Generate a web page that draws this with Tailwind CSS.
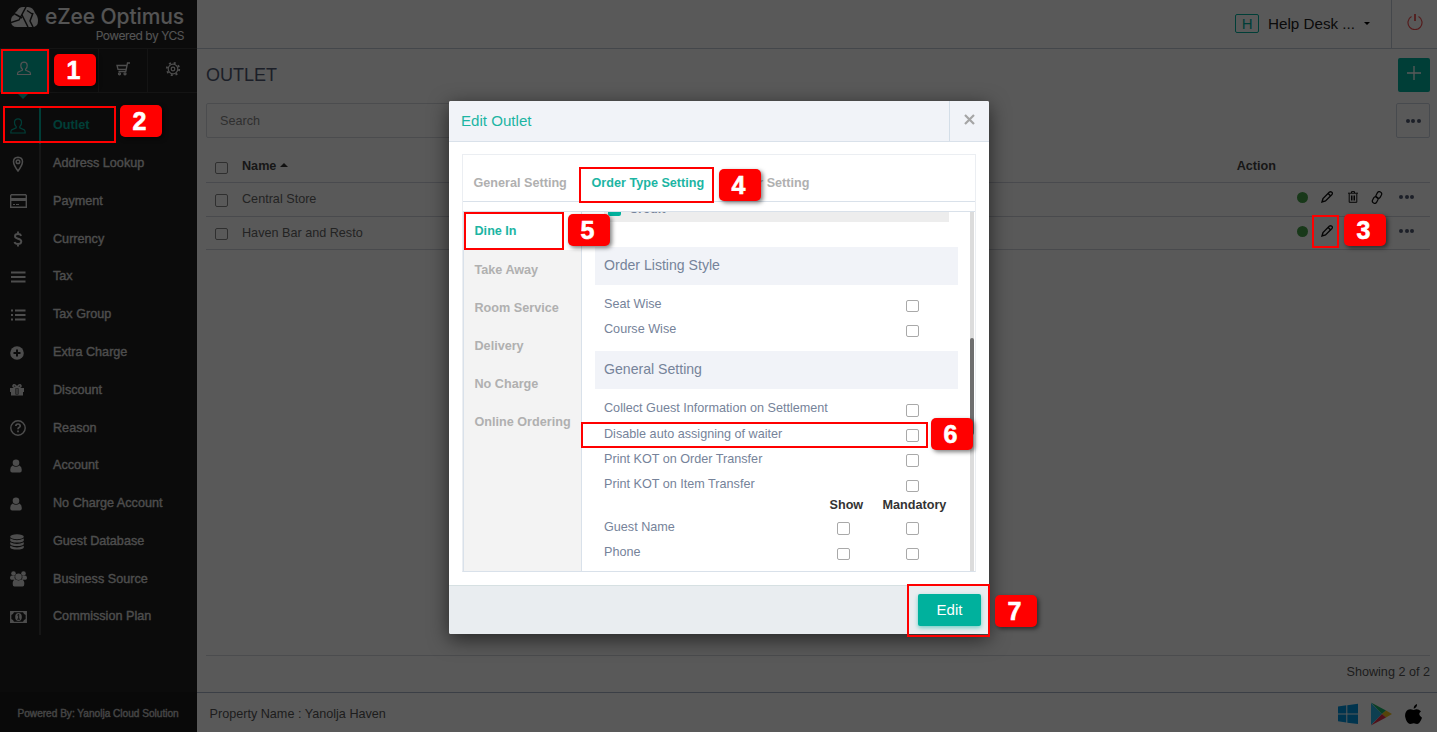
<!DOCTYPE html>
<html lang="en">
  <head>
    <meta charset="UTF-8" />
    <meta name="viewport" content="width=device-width, initial-scale=1.0" />
    <title>eZee Optimus - Outlet</title>
    <script src="https://cdn.jsdelivr.net/npm/@tailwindcss/browser@4"></script>
  </head>
  <body
    class="relative h-screen overflow-hidden bg-white font-['Liberation_Sans',Arial,sans-serif] text-[12.64px] leading-4 text-[#797979]"
  >
    <div class="flex h-full">
      <!-- Sidebar -->
      <aside class="flex w-[197px] shrink-0 flex-col bg-[#222222] text-[#f0f0f0]">
        <div class="flex h-12 gap-[6px] pl-[11px] pt-[7px]">
          <svg class="h-5 w-7 shrink-0" viewBox="0 0 28 20">
            <path d="M6 4Q8 0 12 0H17Q22 0 24 6Q27 9 27 14Q27 20 21 20H6Q0 20 0 14Q0 9 3.500 8Q4 5 6 4Z" fill="#e4e4e4" />
            <path d="M4 7L11 11M15 0L8 13L0 15.500M11 8L17 20M16 3.500L22 7.500M22 6L19 14L22 20" stroke="#222" stroke-width="1.500" fill="none" />
          </svg>
          <div class="-mt-1 w-[140px] font-['Inter',sans-serif]">
            <div class="h-6 whitespace-nowrap text-[21px] leading-7 font-medium tracking-[-0.1px]">eZee Optimus</div>
            <div class="mt-px whitespace-nowrap pr-px text-right text-[12px] leading-4 tracking-[-0.45px]">Powered by YCS</div>
          </div>
        </div>
        <div class="grid h-[45px] grid-cols-[49px_49px_49px_50px] border-y border-[#3a3a3a]">
          <div class="relative flex items-center justify-center bg-[#00b19d] pr-px pb-1">
            <svg class="h-4 w-4" viewBox="0 0 16 16" fill="none" stroke="#eee" stroke-width="1.200"><path d="M6.400 9.200V8.200Q4.600 6.800 4.800 4.200Q5 1.200 8 1.200T11.200 4.200Q11.400 6.800 9.600 8.200V9.200L14 11.200Q14.500 12 14.500 13.500H1.500Q1.500 12 2 11.200Z" /></svg>
            <span class="absolute left-[17px] top-[44px] border-x-[6px] border-t-[6px] border-x-transparent border-t-[#00b19d]"></span>
          </div>
          <div class="border-l border-[#3a3a3a]"></div>
          <div class="flex items-center justify-center border-l border-[#3a3a3a] pb-1">
            <svg class="h-4 w-4" viewBox="0 0 16 16" fill="none" stroke="#ddd" stroke-width="1.300"><path d="M15 2H12.500L10.800 10.500H3.500M12 4.500H2L3 8.300H11" /><circle cx="4.500" cy="12.800" r="1" /><circle cx="10" cy="12.800" r="1" /></svg>
          </div>
          <div class="flex items-center justify-center border-l border-[#3a3a3a] pb-1">
            <svg class="h-4 w-4" viewBox="0 0 16 16" fill="none" stroke="#ddd"><circle cx="8" cy="8" r="4.800" stroke-width="1.200" /><circle cx="8" cy="8" r="1.800" stroke-width="1.200" /><circle cx="8" cy="8" r="6.200" stroke-width="1.800" stroke-dasharray="2 2.870" /></svg>
          </div>
        </div>
        <nav class="mt-[13px] text-[#dcdcdc] [-webkit-text-stroke:0.35px]">
          <a class="flex h-[37.8px] text-[#00b19d]">
            <span class="flex w-[41px] items-center border-r-2 border-[#00b19d] pl-[10px] pt-[2px]">
              <svg class="h-4 w-4" viewBox="0 0 16 16" fill="none" stroke="currentColor" stroke-width="1.200"><path d="M6.200 9.800V8.600Q4.200 7 4.500 4Q4.800.800 8 .800T11.500 4Q11.800 7 9.800 8.600V9.800L14.500 12Q15.200 13 15.200 15H.800Q.800 13 1.500 12Z" /></svg>
            </span>
            <span class="pl-3 pt-[11px] font-bold [-webkit-text-stroke:0px]">Outlet</span>
          </a>
          <a class="flex h-[37.8px]">
            <span class="flex w-[41px] items-center border-r-2 border-[#404040] pl-[10px] pt-[2px]">
              <svg class="h-4 w-4" viewBox="0 0 16 16" fill="none" stroke="currentColor" stroke-width="1.500"><path d="M8 15Q3.500 9 3.500 5.500Q3.700 1.500 8 1.300Q12.300 1.500 12.500 5.500Q12.500 9 8 15Z" /><circle cx="8" cy="5.800" r="1.800" /></svg>
            </span>
            <span class="pl-3 pt-[11px]">Address Lookup</span>
          </a>
          <a class="flex h-[37.8px]">
            <span class="flex w-[41px] items-center border-r-2 border-[#404040] pl-[10px] pt-[2px]">
              <svg class="h-[14px] w-[17px]" viewBox="0 0 17 14"><path d="M1.500.700H15.500L16.300 1.500V13.300H.700V1.500Z" fill="none" stroke="currentColor" stroke-width="1.400" /><path d="M1 4H16V7H1ZM3 10H5V11H3ZM6 10H9V11H6Z" fill="currentColor" /></svg>
            </span>
            <span class="pl-3 pt-[11px]">Payment</span>
          </a>
          <a class="flex h-[37.8px]">
            <span class="flex w-[41px] items-center border-r-2 border-[#404040] pl-[10px] pt-[2px]">
              <svg class="h-4 w-4" viewBox="0 0 16 16" fill="none" stroke="currentColor" stroke-width="1.900"><path d="M11.200 4.800Q10.500 3 8 3Q5 3 5 5.300Q5 7 8 7.700Q11.300 8.500 11.300 10.600Q11 13 8 13Q5.200 13 4.500 11M8 .500V3M8 13V15.500" /></svg>
            </span>
            <span class="pl-3 pt-[12px]">Currency</span>
          </a>
          <a class="flex h-[37.8px]">
            <span class="flex w-[41px] items-center border-r-2 border-[#404040] pl-[10px] pt-[2px]">
              <svg class="h-4 w-4" viewBox="0 0 16 16" stroke="currentColor" stroke-width="2"><path d="M1 3.500H15.500M1 8H15.500M1 12.500H15.500" /></svg>
            </span>
            <span class="pl-3 pt-[11px]">Tax</span>
          </a>
          <a class="flex h-[37.8px]">
            <span class="flex w-[41px] items-center border-r-2 border-[#404040] pl-[10px] pt-[2px]">
              <svg class="h-4 w-4" viewBox="0 0 16 16" stroke="currentColor" stroke-width="2"><path d="M1 3.500H3M5 3.500H15.500M1 8H3M5 8H15.500M1 12.500H3M5 12.500H15.500" /></svg>
            </span>
            <span class="pl-3 pt-[11px]">Tax Group</span>
          </a>
          <a class="flex h-[37.8px]">
            <span class="flex w-[41px] items-center border-r-2 border-[#404040] pl-[10px] pt-[2px]">
              <svg class="h-[14px] w-[14px]" viewBox="0 0 14 14"><circle cx="7" cy="7" r="6.800" fill="currentColor" /><path d="M7 3.500V10.500M3.500 7H10.500" stroke="#222" stroke-width="2" /></svg>
            </span>
            <span class="pl-3 pt-[11px]">Extra Charge</span>
          </a>
          <a class="flex h-[37.8px]">
            <span class="flex w-[41px] items-center border-r-2 border-[#404040] pl-[10px] pt-[2px]">
              <svg class="h-[14px] w-[14px]" viewBox="0 0 14 14"><path d="M0 5H5.500V12.500H1V9H0ZM8.500 5H14V9H13V12.500H8.500ZM6.300 6H7.700V11H6.300ZM5 11.500H9V12.500H5Z" fill="currentColor" /><path d="M7 4.500Q5 1 3.500 2Q2 4 5 4.500H9Q12 4 10.500 2Q9 1 7 4.500Z" fill="none" stroke="currentColor" stroke-width="1.600" /></svg>
            </span>
            <span class="pl-3 pt-[11px]">Discount</span>
          </a>
          <a class="flex h-[37.8px]">
            <span class="flex w-[41px] items-center border-r-2 border-[#404040] pl-[10px] pt-[2px]">
              <svg class="h-4 w-4" viewBox="0 0 16 16" fill="none" stroke="currentColor"><circle cx="8" cy="8" r="7.200" stroke-width="1.400" /><path d="M5.800 6Q6 4 8 4T10.200 6Q10.200 7 9 7.600Q8 8.200 8 9.300M8 10.500V12.300" stroke-width="1.700" /></svg>
            </span>
            <span class="pl-3 pt-[12px]">Reason</span>
          </a>
          <a class="flex h-[37.8px]">
            <span class="flex w-[41px] items-center border-r-2 border-[#404040] pl-[10px] pt-[2px]">
              <svg class="h-[14px] w-3" viewBox="0 0 12 14" fill="currentColor"><circle cx="6" cy="3.800" r="3.300" /><path d="M2.500 6.500Q6 9 9.500 6.500Q11.800 7.500 11.800 11Q11.800 13.500 9.800 13.500H2.200Q.200 13.500.200 11Q.200 7.500 2.500 6.500Z" /></svg>
            </span>
            <span class="pl-3 pt-[11px]">Account</span>
          </a>
          <a class="flex h-[37.8px]">
            <span class="flex w-[41px] items-center border-r-2 border-[#404040] pl-[10px] pt-[2px]">
              <svg class="h-[14px] w-3" viewBox="0 0 12 14" fill="currentColor"><circle cx="6" cy="3.800" r="3.300" /><path d="M2.500 6.500Q6 9 9.500 6.500Q11.800 7.500 11.800 11Q11.800 13.500 9.800 13.500H2.200Q.200 13.500.200 11Q.200 7.500 2.500 6.500Z" /></svg>
            </span>
            <span class="pl-3 pt-[11px]">No Charge Account</span>
          </a>
          <a class="flex h-[37.8px]">
            <span class="flex w-[41px] items-center border-r-2 border-[#404040] pl-[10px] pt-[2px]">
              <svg class="h-4 w-[14px]" viewBox="0 0 14 16" fill="currentColor"><ellipse cx="7" cy="2.800" rx="6.800" ry="2.500" /><path d="M.200 4.500Q7 8 13.800 4.500V6.500Q13 8.500 7 8.500T.200 6.500ZM.200 8.300Q7 11.500 13.800 8.300V10Q13 12 7 12T.200 10ZM.200 11.800Q7 15 13.800 11.800V13.500Q13 15.600 7 15.600T.200 13.500Z" /></svg>
            </span>
            <span class="pl-3 pt-[11px]">Guest Database</span>
          </a>
          <a class="flex h-[37.8px]">
            <span class="flex w-[41px] items-center border-r-2 border-[#404040] pl-[10px] pt-[2px]">
              <svg class="h-4 w-[17px]" viewBox="0 0 17 16" fill="currentColor"><circle cx="3.500" cy="2.500" r="2.300" /><circle cx="13.500" cy="2.500" r="2.300" /><circle cx="8.500" cy="5.800" r="3.300" /><path d="M1 4.800H4.800Q4 7 5.500 8.700H1.500Q0 8.500 0 7Q0 5.500 1 4.800ZM16 4.800H12.200Q13 7 11.500 8.700H15.500Q17 8.500 17 7Q17 5.500 16 4.800ZM5.200 8.300Q8.500 10.500 11.800 8.300Q14.500 9.500 14.300 13Q14.300 15.500 12.500 15.500H4.500Q2.700 15.500 2.700 13Q2.500 9.500 5.200 8.300Z" /></svg>
            </span>
            <span class="pl-3 pt-[11px]">Business Source</span>
          </a>
          <a class="flex h-[37.8px]">
            <span class="flex w-[41px] items-center border-r-2 border-[#404040] pl-[10px] pt-[2px]">
              <svg class="h-3 w-[17px]" viewBox="0 0 17 12"><path d="M.700.700H16.300V11.300H.700Z" fill="none" stroke="currentColor" stroke-width="1.300" /><path d="M1 1H4Q3.500 3.500 1 4ZM16 1H13Q13.500 3.500 16 4ZM1 11H4Q3.500 8.500 1 8ZM16 11H13Q13.500 8.500 16 8Z" fill="currentColor" /><ellipse cx="8.500" cy="6" rx="3.300" ry="4" fill="currentColor" /><path d="M7.300 4.300L8.700 3.300V8M7.200 8.200H10" stroke="#222" fill="none" /></svg>
            </span>
            <span class="pl-3 pt-[11px]">Commission Plan</span>
          </a>
        </nav>
        <div class="mt-auto h-10 bg-[#1c1c1c] pl-[17.5px] pt-[14px] text-[10.1px] whitespace-nowrap text-[#c4c4c4] [-webkit-text-stroke:0.4px]">
          Powered By: Yanolja Cloud Solution
        </div>
      </aside>

      <!-- Page -->
      <main class="flex grow flex-col">
        <header class="flex h-[49px] justify-end border-b border-[#c3ccd8] text-[15.2px] text-[#222222]">
          <div class="flex items-center pb-px">
            <span class="flex h-[19px] w-6 items-center justify-center rounded-xs border border-[#00b19d] text-[15px] text-[#00b19d]">H</span>
            <span class="ml-[9px]">Help Desk ...</span>
            <span class="ml-[9px] mr-[21px] border-x-[3px] border-t-[3px] border-x-transparent border-t-black"></span>
          </div>
          <div class="flex w-[46px] items-center justify-center border-l border-[#c3ccd8] pb-[5px]">
            <svg class="h-4 w-4" viewBox="0 0 16 16" fill="none" stroke="#f05050" stroke-width="1.200"><path d="M4.500 2.500A7 7 0 1 0 11.500 2.500" /><path d="M8 0V7" stroke-width="1.800" /></svg>
          </div>
        </header>

        <section class="flex grow flex-col px-[9px] pr-[7px]">
          <div class="flex h-[54px] items-start justify-between pt-[9px]">
            <h1 class="pt-[7px] text-[18px] leading-5 text-[#505b72]">OUTLET</h1>
            <button class="flex h-[34px] w-8 items-center justify-center rounded-xs bg-[#00b19d] pb-1">
              <svg class="h-[14px] w-[14px]" viewBox="0 0 14 14" stroke="#fff" stroke-width="1.300"><path d="M7 0V14M0 7H14" /></svg>
            </button>
          </div>
          <div class="flex justify-between">
            <div class="h-[35px] w-[400px] rounded-xs border border-[#d6d9e0] pl-[13px] pt-[9px] text-[#888]">Search</div>
            <button class="flex h-[35px] w-[34px] items-center justify-center gap-[1.5px] rounded-xs border border-[#ccd3e0]">
              <span class="size-[4px] rounded-full bg-[#505b72]"></span>
              <span class="size-[4px] rounded-full bg-[#505b72]"></span>
              <span class="size-[4px] rounded-full bg-[#505b72]"></span>
            </button>
          </div>

          <div class="mt-3 flex h-[33px] border-b border-[#d0d4e0] pl-[9px] font-bold text-[#444]">
            <span class="mt-[12px] h-3 w-[13px] rounded-xs border border-[#888]"></span>
            <span class="ml-[14px] mt-[8px]">Name</span>
            <span class="ml-1 mt-[13px] h-0 border-x-[4px] border-b-[4px] border-x-transparent border-b-[#333]"></span>
            <span class="ml-auto mr-[154px] mt-[8px]">Action</span>
          </div>
          <div class="flex h-[34px] border-b border-[#d0d4dc] pl-[9px] text-[#666]">
            <span class="mt-[11px] h-[13px] w-[13px] rounded-xs border border-[#888]"></span>
            <span class="ml-[14px] mt-[8px]">Central Store</span>
            <div class="ml-auto mr-4 flex h-7 items-center">
              <span class="size-[11px] rounded-full bg-[#46a049]"></span>
              <svg class="ml-[13px] h-3 w-3" viewBox="0 0 12 12" fill="none" stroke="#111" stroke-width="1.400"><path d="M1 11L2 7.500L8.200 1.300Q9.500.300 10.800 1.300T10.700 3.800L4.500 10ZM7.200 2.500L9.600 4.900" /></svg>
              <svg class="ml-[15px] h-3 w-[10px]" viewBox="0 0 10 12" fill="none" stroke="#111"><path d="M0 2.200H10M3.500 2V.600H6.500V2M1.200 2.500V11.300H8.800V2.500M3.500 4.500V9.500M5 4.500V9.500M6.500 4.500V9.500" /></svg>
              <svg class="ml-[13px] h-[13px] w-3" viewBox="0 0 12 13" fill="none" stroke="#111" stroke-width="1.200"><rect x="-2.300" y="-3.500" width="4.600" height="7" rx="2.300" transform="translate(7.800 4) rotate(28)" /><rect x="-2.300" y="-3.500" width="4.600" height="7" rx="2.300" transform="translate(4.200 9) rotate(28)" /></svg>
              <span class="ml-4 flex gap-[1.5px]">
                <span class="size-[4px] rounded-full bg-[#505b72]"></span>
                <span class="size-[4px] rounded-full bg-[#505b72]"></span>
                <span class="size-[4px] rounded-full bg-[#505b72]"></span>
              </span>
            </div>
          </div>
          <div class="flex h-[33px] border-b border-[#d0d4dc] pl-[9px] text-[#666]">
            <span class="mt-[11px] h-[12px] w-[13px] rounded-xs border border-[#888]"></span>
            <span class="ml-[14px] mt-[8px]">Haven Bar and Resto</span>
            <div class="ml-auto mr-4 flex h-7 items-center">
              <span class="size-[11px] rounded-full bg-[#46a049]"></span>
              <svg class="ml-[13px] mr-[66px] h-3 w-3" viewBox="0 0 12 12" fill="none" stroke="#111" stroke-width="1.400"><path d="M1 11L2 7.500L8.200 1.300Q9.500.300 10.800 1.300T10.700 3.800L4.500 10ZM7.200 2.500L9.600 4.900" /></svg>
              <span class="flex gap-[1.5px]">
                <span class="size-[4px] rounded-full bg-[#505b72]"></span>
                <span class="size-[4px] rounded-full bg-[#505b72]"></span>
                <span class="size-[4px] rounded-full bg-[#505b72]"></span>
              </span>
            </div>
          </div>
          <div class="mt-auto h-[37px] border-t border-[#d8dae0] pt-2 text-right text-[#555]">Showing 2 of 2</div>
        </section>

        <footer class="flex h-10 border-t border-[#a9b6c8] pl-[12.5px] pt-[13px] text-[#555]">
          <span>Property Name : Yanolja Haven</span>
          <div class="-mt-[3px] ml-auto mr-[15px] flex gap-[13px]">
            <svg class="h-[22px] w-5" viewBox="0 0 20 22" fill="#0096e0"><path d="M0 3.500L8.300 2.300V10.500H0ZM9.300 2.200L20 .800V10.500H9.300ZM0 11.500H8.300V19.500L0 18.300ZM9.300 11.500H20V21L9.300 19.700Z" /></svg>
            <svg class="-mt-px h-6 w-[21px]" viewBox="0 0 21 24"><path d="M0 1V23L11 12Z" fill="#25b5e8" /><path d="M0 .500L15 8.500L11 12Z" fill="#18b56a" /><path d="M15 8.500L21 12L15 15.500L11 12Z" fill="#f5c31d" /><path d="M0 23.500L11 12L15 15.500Z" fill="#e6304a" /></svg>
            <svg class="h-[22px] w-[17px]" viewBox="0 0 17 22" fill="#000"><path d="M12 1Q12.300 4.500 8.700 5.700Q8.500 2.500 12 1ZM8.800 7Q12.500 4.800 16 8.200Q12 11.300 17 14.700Q15 20.500 12.200 21Q11 21 8.800 20.200Q6 21 5 21Q1.500 20 .200 14Q-.500 9 3 6.700Q5 5.700 8.800 7Z" /></svg>
          </div>
        </footer>
      </main>
    </div>

    <div class="absolute inset-0 bg-black/65"></div>

    <!-- Edit Outlet dialog -->
    <div class="absolute left-[449px] top-[101px] flex h-[533px] w-[540px] flex-col rounded-xs bg-white shadow-[0_5px_20px_rgba(0,0,0,0.6)]">
      <div class="flex h-[41px] rounded-t-xs border-b border-[#d9e1ea] bg-[#f1f3f8]">
        <h2 class="grow pl-[12px] pt-[12px] text-[15.1px] text-[#1cb5a3]">Edit Outlet</h2>
        <div class="w-10 border-l border-[#d4dee8] pl-[14px] pt-[13px]">
          <svg class="h-[11px] w-[11px]" viewBox="0 0 11 11" stroke="#a5a5a5" stroke-width="2.200"><path d="M1 1L10 10M10 1L1 10" /></svg>
        </div>
      </div>

      <div class="mx-[13px] mt-3 flex h-[418px] flex-col border border-[#ebeef2] border-b-[#d9e1ea]">
        <div class="flex h-[47px] shrink-0 border-b border-[#d9e1ea] pl-[10.5px] pt-[20px] font-bold text-[#b0b0b0]">
          <span class="w-[118px]">General Setting</span>
          <span class="w-[132px] text-[#1cb5a3]">Order Type Setting</span>
          <span class="whitespace-nowrap pl-[6px]">Other Setting</span>
        </div>
        <div class="mt-[9px] flex min-h-0 grow border-t border-[#d9e1ea]">
          <div class="w-[119px] shrink-0 border-x border-[#d9e1ea] bg-[#f3f3f3] font-bold text-[#b0b0b0]">
            <div class="h-[38px] bg-white pl-[10.5px] pt-[10.5px] text-[#1cb5a3]">Dine In</div>
            <div class="h-[38px] pl-[10.5px] pt-[12px]">Take Away</div>
            <div class="h-[38px] pl-[10.5px] pt-[12px]">Room Service</div>
            <div class="h-[38px] pl-[10.5px] pt-[12px]">Delivery</div>
            <div class="h-[38px] pl-[10.5px] pt-[12px]">No Charge</div>
            <div class="h-[38px] whitespace-nowrap pl-[10.5px] pt-[12px]">Online Ordering</div>
          </div>

          <div class="grow overflow-hidden pl-[13px] text-[#76839a]">
            <div class="ml-[9px] flex h-[10px] w-[345px] overflow-hidden bg-[#ededed] pl-1">
              <span class="-mt-[9px] h-[13px] w-[13px] rounded-xs bg-[#00b19d]"></span>
              <span class="-mt-[11px] ml-2 font-bold">Credit</span>
            </div>
            <div class="mt-[25px] h-[38px] w-[363px] bg-[#f1f3f8] pl-[9px] pt-[10px] text-[14.1px]">Order Listing Style</div>
            <div class="w-[324px] pl-[9px] pt-[6px]">
              <div class="flex h-[25px] justify-between pt-[5px]">Seat Wise <span class="mt-1 h-3 w-[13px] rounded-xs border border-[#a9a9a9]"></span></div>
              <div class="flex h-[25px] justify-between pt-[5px]">Course Wise <span class="mt-1 h-3 w-[13px] rounded-xs border border-[#a9a9a9]"></span></div>
            </div>
            <div class="mt-[10px] h-[38px] w-[363px] bg-[#f1f3f8] pl-[9px] pt-[10px] text-[14.1px]">General Setting</div>
            <div class="w-[324px] pl-[9px] pt-[6px]">
              <div class="flex h-[26px] justify-between pt-[5px]">Collect Guest Information on Settlement <span class="mt-1 h-[13px] w-[13px] rounded-xs border border-[#a9a9a9]"></span></div>
              <div class="flex h-[25px] justify-between pt-[5px]">Disable auto assigning of waiter <span class="mt-[3px] h-[13px] w-[13px] rounded-xs border border-[#a9a9a9]"></span></div>
              <div class="flex h-[25px] justify-between pt-[5px]">Print KOT on Order Transfer <span class="mt-[3px] h-[13px] w-[13px] rounded-xs border border-[#a9a9a9]"></span></div>
              <div class="flex h-[21px] justify-between pt-[5px]">Print KOT on Item Transfer <span class="mt-1 h-3 w-[13px] shrink-0 rounded-xs border border-[#a9a9a9]"></span></div>
            </div>
            <div class="flex h-[22px] pl-[234.5px] pt-[5px] font-bold text-[#333]"><span class="w-[53px]">Show</span><span>Mandatory</span></div>
            <div class="w-[324px] pl-[9px]">
              <div class="flex h-[25px] pt-[5px]"><span class="w-[233px]">Guest Name</span><span class="mt-[3px] h-[13px] w-[13px] rounded-xs border border-[#a9a9a9]"></span><span class="ml-auto mt-[3px] h-[13px] w-[13px] rounded-xs border border-[#a9a9a9]"></span></div>
              <div class="flex h-[25px] pt-[5px]"><span class="w-[233px]">Phone</span><span class="mt-1 h-3 w-[13px] rounded-xs border border-[#a9a9a9]"></span><span class="ml-auto mt-1 h-3 w-[13px] rounded-xs border border-[#a9a9a9]"></span></div>
            </div>
          </div>
          <div class="mr-px w-1 shrink-0 bg-[#dcdcdc] pt-[126px]">
            <div class="h-[97px] rounded-full bg-[#6f6f6f]"></div>
          </div>
        </div>
      </div>

      <div class="mt-auto flex h-[49px] justify-end rounded-b-xs border-t border-[#d6e0e2] bg-[#e9edf0] pr-2 pt-2">
        <button class="h-8 w-[63px] rounded-xs bg-[#00b19d] text-[15px] text-white shadow-[0_2px_4px_rgba(0,177,157,0.5)]">Edit</button>
      </div>
    </div>

    <!-- Step markers -->
    <div class="absolute left-[1px] top-[49px] h-[45px] w-[48px] border-2 border-[#ff0000]"></div>
    <div class="absolute left-[3px] top-[106px] h-[37px] w-[113px] border-2 border-[#ff0000]"></div>
    <div class="absolute left-[1312px] top-[215px] h-[33px] w-[27px] border-2 border-[#ff0000]"></div>
    <div class="absolute left-[579px] top-[167px] h-[36px] w-[135px] border-2 border-[#ff0000]"></div>
    <div class="absolute left-[464px] top-[212px] h-[38px] w-[100px] border-2 border-[#ff0000]"></div>
    <div class="absolute left-[581px] top-[422px] h-[26px] w-[347px] border-2 border-[#ff0000]"></div>
    <div class="absolute left-[907px] top-[584px] h-[53px] w-[83px] border-2 border-[#ff0000]"></div>

    <div class="text-[25px] leading-8 font-bold text-white [-webkit-text-stroke:0.6px]">
      <div class="absolute left-[54px] top-[54px] h-8 w-[42px] rounded-[5px] bg-[#ff0000] pr-[3px] text-center shadow-[2px_2px_4px_rgba(0,0,0,0.5)]">1</div>
      <div class="absolute left-[120px] top-[105px] h-8 w-[42px] rounded-[5px] bg-[#ff0000] pr-[3px] text-center shadow-[2px_2px_4px_rgba(0,0,0,0.5)]">2</div>
      <div class="absolute left-[1344px] top-[214px] h-8 w-[42px] rounded-[5px] bg-[#ff0000] pr-[3px] text-center shadow-[2px_2px_4px_rgba(0,0,0,0.5)]">3</div>
      <div class="absolute left-[719px] top-[169px] h-8 w-[42px] rounded-[5px] bg-[#ff0000] pr-[3px] text-center shadow-[2px_2px_4px_rgba(0,0,0,0.5)]">4</div>
      <div class="absolute left-[568px] top-[214px] h-8 w-[42px] rounded-[5px] bg-[#ff0000] pr-[3px] text-center shadow-[2px_2px_4px_rgba(0,0,0,0.5)]">5</div>
      <div class="absolute left-[931px] top-[418px] h-8 w-[42px] rounded-[5px] bg-[#ff0000] pr-[3px] text-center shadow-[2px_2px_4px_rgba(0,0,0,0.5)]">6</div>
      <div class="absolute left-[995px] top-[595px] h-8 w-[42px] rounded-[5px] bg-[#ff0000] pr-[3px] text-center shadow-[2px_2px_4px_rgba(0,0,0,0.5)]">7</div>
    </div>
  </body>
</html>
